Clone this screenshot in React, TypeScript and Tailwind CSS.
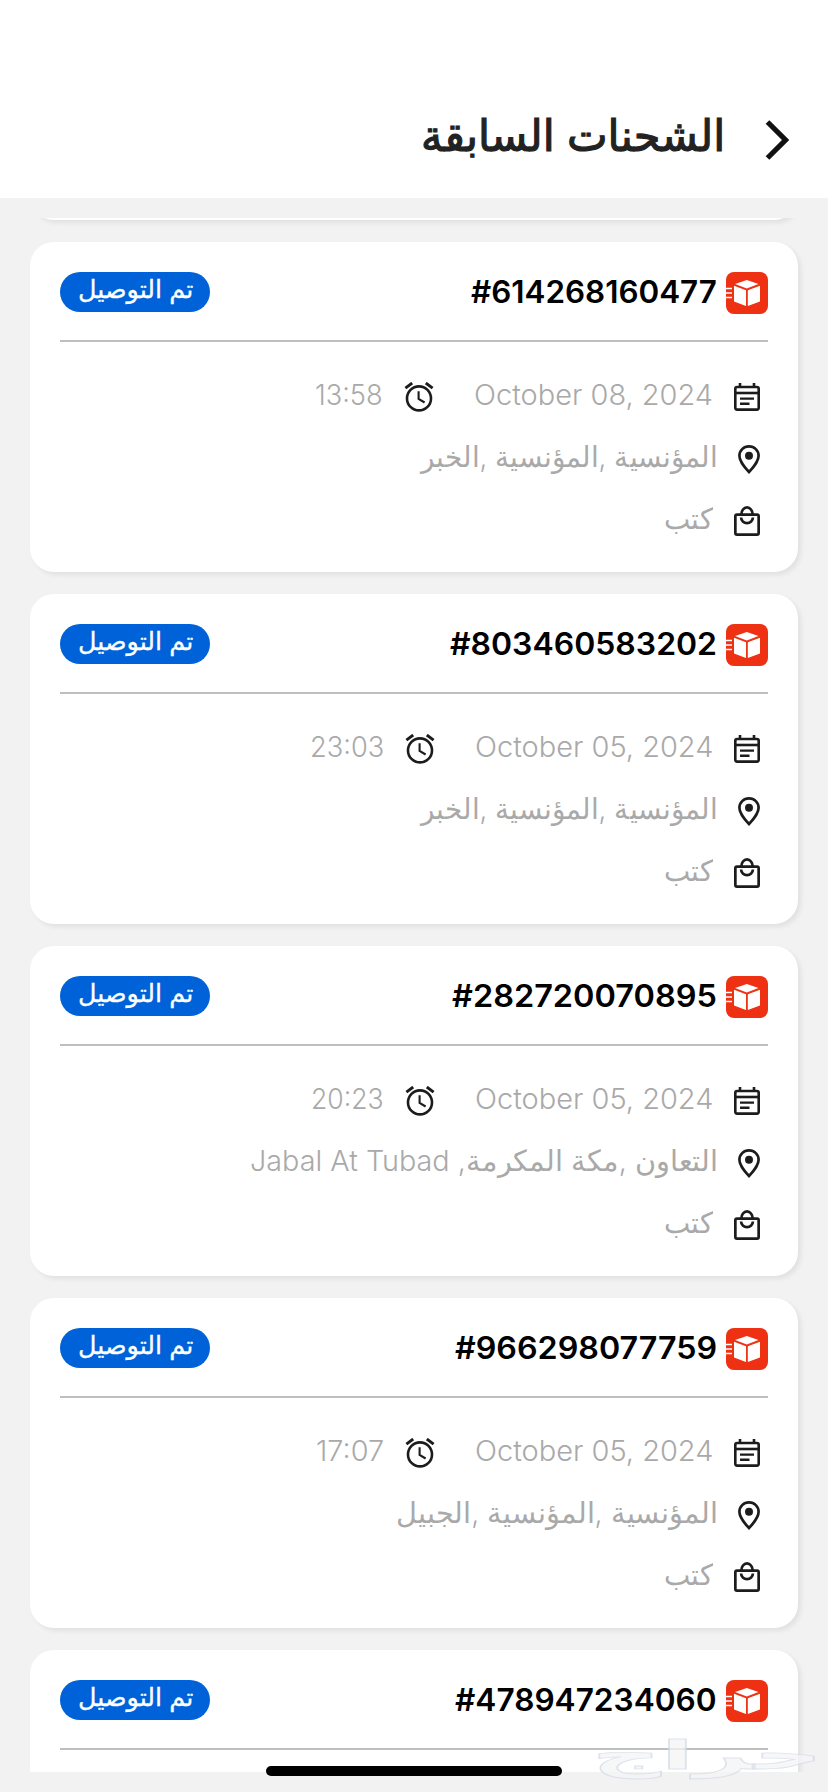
import React, { useLayoutEffect, useRef, useState } from 'react';

interface ShipmentDetails {
  date: string;
  dateWidth: number;
  time: string;
  timeWidth: number;
  address: string;
  addressWidth: number;
  item: string;
}

interface Shipment {
  id: string;
  idWidth: number;
  details?: ShipmentDetails;
}

const shipments: Shipment[] = [
  {
    id: '#614268160477',
    idWidth: 246,
    details: {
      date: 'October 08, 2024', dateWidth: 239,
      time: '13:58', timeWidth: 68,
      address: 'المؤنسية ,المؤنسية ,الخبر', addressWidth: 297,
      item: 'كتب',
    },
  },
  {
    id: '#803460583202',
    idWidth: 267,
    details: {
      date: 'October 05, 2024', dateWidth: 238,
      time: '23:03', timeWidth: 74,
      address: 'المؤنسية ,المؤنسية ,الخبر', addressWidth: 297,
      item: 'كتب',
    },
  },
  {
    id: '#282720070895',
    idWidth: 265,
    details: {
      date: 'October 05, 2024', dateWidth: 238,
      time: '20:23', timeWidth: 73,
      address: 'التعاون ,مكة المكرمة, Jabal At Tubad', addressWidth: 468,
      item: 'كتب',
    },
  },
  {
    id: '#966298077759',
    idWidth: 262,
    details: {
      date: 'October 05, 2024', dateWidth: 238,
      time: '17:07', timeWidth: 68,
      address: 'المؤنسية ,المؤنسية ,الجبيل', addressWidth: 322,
      item: 'كتب',
    },
  },
  { id: '#478947234060', idWidth: 262 },
];

interface FitTextProps {
  width: number;
  dir?: 'rtl' | 'ltr';
  className?: string;
  children: string;
}

// Single line of text stretched horizontally to a given width
const FitText: React.FC<FitTextProps> = ({ width, dir = 'rtl', className = '', children }) => {
  const ref = useRef<HTMLSpanElement>(null);
  const [scale, setScale] = useState(1);

  useLayoutEffect(() => {
    if (ref.current) {
      setScale(width / ref.current.offsetWidth);
    }
  }, [width, children]);

  return (
    <span dir="ltr" className={`block shrink-0 whitespace-nowrap ${className}`} style={{ width }}>
      <span
        ref={ref}
        dir={dir}
        className="inline-block origin-left"
        style={{ transform: `scaleX(${scale})` }}
      >
        {children}
      </span>
    </span>
  );
};

const BoxLogo = () => (
  <svg viewBox="0 0 42 42" className="size-[42px] shrink-0">
    <rect width="42" height="42" rx="8" fill="#ee3013" />
    <path d="M20.8 8 32.5 12 20.8 16.6 9 12Z" fill="#fff" />
    <path d="M8 13.8 20 18.2V34L8 29.5Z" fill="#fff" />
    <path d="M34 13.8 21.8 18.2V34L34 29.5Z" fill="#fff" />
    <path d="M0 16.5h6M0 21h6M0 25.5h6" stroke="#fff" strokeWidth="1.3" />
  </svg>
);

const CalendarIcon = () => (
  <svg viewBox="0 0 26 28" className="h-7 w-[26px]" fill="none" stroke="#1c1c1c">
    <rect x="1.3" y="4" width="23.4" height="22.6" rx="1.8" strokeWidth="2.6" />
    <path d="M1.3 10h23.4" strokeWidth="2.6" />
    <path d="M6 0v4M20 0v4" strokeWidth="2.6" />
    <path d="M6 15.6h14M6 20.8h9.5" strokeWidth="2.4" />
  </svg>
);

const ClockIcon = () => (
  <svg viewBox="0 0 30 30" className="size-[30px] shrink-0" fill="none" stroke="#1c1c1c">
    <circle cx="15" cy="16.4" r="12" strokeWidth="2.6" />
    <path d="M1.4 6.2 8.2 1M28.6 6.2 21.8 1" strokeWidth="2.9" />
    <path d="M14.6 9.2v7.6l6 3.7" strokeWidth="2.1" />
  </svg>
);

const PinIcon = () => (
  <svg viewBox="0 0 22 29" className="h-[29px] w-[22px]">
    <path
      d="M11 1.4C5.6 1.4 1.4 5.6 1.4 10.8c0 6.4 9.6 16.2 9.6 16.2s9.6-9.8 9.6-16.2C20.6 5.6 16.4 1.4 11 1.4Z"
      fill="none"
      stroke="#1c1c1c"
      strokeWidth="2.7"
    />
    <circle cx="11" cy="10.8" r="4" fill="#1c1c1c" />
  </svg>
);

const BagIcon = () => (
  <svg viewBox="0 0 26 30" className="h-[30px] w-[26px]" fill="none" stroke="#1c1c1c" strokeWidth="2.7">
    <rect x="1.35" y="8.6" width="23.3" height="20" rx="1.6" />
    <path d="M7.3 8.6a5.7 7.2 0 0 1 11.4 0" />
    <path d="M7.1 11.6a5.9 5.6 0 0 0 11.8 0" />
  </svg>
);

const DetailRows: React.FC<{ details: ShipmentDetails }> = ({ details }) => (
  <div className="pt-6 text-[#a9a9a9]">
    <div className="flex h-[62px] items-center">
      <span className="flex w-[50px] pr-[8px]">
        <CalendarIcon />
      </span>
      <FitText
        width={details.dateWidth}
        dir="ltr"
        className="mr-[5px] pb-[4px] text-[28px] leading-10 font-light"
      >
        {details.date}
      </FitText>
      <span className="mr-[40px]">
        <ClockIcon />
      </span>
      <FitText
        width={details.timeWidth}
        dir="ltr"
        className="mr-[21px] pb-[4px] text-[28px] leading-10 font-light"
      >
        {details.time}
      </FitText>
    </div>
    <div className="flex h-[62px] items-center">
      <span className="flex w-[50px] pr-[8px]">
        <PinIcon />
      </span>
      <FitText
        width={details.addressWidth}
        className="pb-[5px] text-[29px] leading-10 font-light"
      >
        {details.address}
      </FitText>
    </div>
    <div className="flex h-[62px] items-center">
      <span className="flex w-[50px] pr-[8px]">
        <BagIcon />
      </span>
      <FitText width={49} className="mr-[5px] pb-[5px] text-[29px] leading-10 font-light">
        {details.item}
      </FitText>
    </div>
  </div>
);

const ShipmentCard: React.FC<{ shipment: Shipment }> = ({ shipment }) => (
  <div className="h-[330px] shrink-0 rounded-[24px] bg-white px-[30px] pt-[30px] shadow-[3px_3px_5px_rgba(0,0,0,0.07)]">
    <div className="flex h-[42px] items-start">
      <BoxLogo />
      <FitText
        width={shipment.idWidth}
        dir="ltr"
        className="mr-[9px] text-[31px] leading-[39px] font-semibold text-black"
      >
        {shipment.id}
      </FitText>
      <div className="mr-auto flex h-10 w-[150px] justify-center rounded-full bg-[#0062d9] text-white">
        <FitText
          width={115}
          className="text-[25px] leading-[35px] [-webkit-text-stroke:0.3px_#fff]"
        >
          تم التوصيل
        </FitText>
      </div>
    </div>
    <div className="mt-[26px] h-[2px] bg-[#bfbfbf]" />
    {shipment.details && <DetailRows details={shipment.details} />}
  </div>
);

export default function App() {
  return (
    <div
      dir="rtl"
      className="relative flex h-[1792px] w-[828px] flex-col overflow-hidden bg-[#f2f2f2] font-['Inter','DejaVu_Sans',sans-serif]"
    >
      <header className="flex h-[198px] shrink-0 items-start bg-white pt-[108px] pr-[39px]">
        <svg viewBox="0 0 24 40" className="mt-[12px] h-[40px] w-6 shrink-0">
          <path d="M2.5 2 20.5 20 2.5 38" fill="none" stroke="#111" strokeWidth="5.2" />
        </svg>
        <FitText
          width={304}
          className="mr-[40px] text-[44px] leading-[54px] font-normal text-[#222] [-webkit-text-stroke:1.2px_#222]"
        >
          الشحنات السابقة
        </FitText>
      </header>

      <main className="mt-5 flex h-[1554px] shrink-0 flex-col justify-start overflow-hidden px-[30px]">
        <div className="h-[24px] shrink-0">
          <div className="-mt-[328px] h-[330px] rounded-[24px] bg-white shadow-[3px_3px_5px_rgba(0,0,0,0.07)]" />
        </div>
        <div className="flex flex-col gap-[22px]">
          {shipments.map((shipment) => (
            <ShipmentCard key={shipment.id} shipment={shipment} />
          ))}
        </div>
      </main>

      <div className="absolute top-[1766px] left-[266px] h-[10px] w-[296px] rounded-full bg-black" />
      <div className="absolute top-[1727px] left-[592px] opacity-75">
        <FitText
          width={230}
          className="text-[40px] leading-[56px] font-bold text-[#f5f5f6] [-webkit-text-stroke:0.8px_#d3dbe6]"
        >
          حراج
        </FitText>
      </div>
    </div>
  );
}
